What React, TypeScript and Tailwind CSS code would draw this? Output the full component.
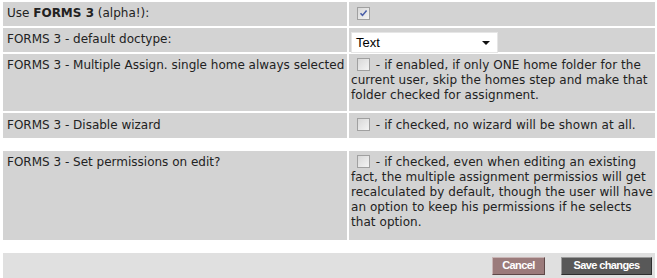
import React from "react";

function Box({ checked = false }: { checked?: boolean }) {
  return (
    <span className="inline-block align-[-2px] w-[13px] h-[13px] border border-[#a0a0a0] bg-gradient-to-br from-[#d8d8d8] to-[#f4f4f4] relative">
      {checked && (
        <svg viewBox="0 0 11 11" className="absolute inset-0 w-[11px] h-[11px]">
          <path d="M2.5 5.2 L4.5 7.4 L8.6 2.6" fill="none" stroke="#4a5fa8" strokeWidth="1.6" />
        </svg>
      )}
    </span>
  );
}

export default function App() {
  const cell = "bg-[#d3d3d3] text-[#222] leading-[15px] whitespace-nowrap";
  const left = `${cell} pl-[4px] pt-[4px]`;
  const right = `${cell} pl-[2px] pt-[4px] tracking-[0.06px]`;
  return (
    <div
      className="w-[657px] h-[278px] bg-white pl-[3px] pt-[2px] text-[12px]"
      style={{ fontFamily: '"DejaVu Sans", Verdana, sans-serif' }}
    >
      <div className="grid grid-cols-[344px_306px] gap-x-[2px] gap-y-[2px] w-[652px]">
        <div className={`${left} h-[24px]`}>
          Use <b>FORMS 3</b> (alpha!):
        </div>
        <div className={`${right} h-[24px] pl-[8px] pt-[5px]`}>
          <Box checked />
        </div>

        <div className={`${left} h-[24px]`}>FORMS 3 - default doctype:</div>
        <div className={`${right} h-[24px] pt-[2px]`}>
          <div
            className="w-[147px] h-[21px] bg-white border border-[#e6e6e6] flex items-center justify-between pl-[4px] pr-[7px] text-[13px] text-black tracking-normal"
            style={{ fontFamily: '"Liberation Sans", Arial, sans-serif' }}
          >
            <span>Text</span>
            <svg width="8" height="4" viewBox="0 0 8 4">
              <path d="M0 0 H8 L4 4 Z" fill="#111" />
            </svg>
          </div>
        </div>

        <div className={`${left} h-[57px]`}>FORMS 3 - Multiple Assign. single home always selected</div>
        <div className={`${right} h-[57px]`}>
          <span className="ml-[6px] mr-[2px]"><Box /></span> - if enabled, if only ONE home folder for the
          <br />
          current user, skip the homes step and make that
          <br />
          folder checked for assignment.
        </div>

        <div className={`${left} h-[25px] pt-[5px]`}>FORMS 3 - Disable wizard</div>
        <div className={`${right} h-[25px] pt-[5px]`}>
          <span className="ml-[6px] mr-[2px]"><Box /></span> - if checked, no wizard will be shown at all.
        </div>

        <div className="col-span-2 h-[9px] bg-white"></div>

        <div className={`${left} h-[89px]`}>FORMS 3 - Set permissions on edit?</div>
        <div className={`${right} h-[89px]`}>
          <span className="ml-[6px] mr-[2px]"><Box /></span> - if checked, even when editing an existing
          <br />
          fact, the multiple assignment permissios will get
          <br />
          recalculated by default, though the user will have
          <br />
          an option to keep his permissions if he selects
          <br />
          that option.
        </div>
      </div>

      <div className="mt-[13px] w-[652px] h-[25px] bg-[#e0e0e0] flex items-center justify-end gap-[16px] pr-[3px]">
        <button
          className="h-[18px] w-[53px] bg-[#9b7b7b] text-white font-bold text-[11px] tracking-[-0.6px] border border-t-[#c9b5b5] border-l-[#c9b5b5] border-b-[#5e4848] border-r-[#5e4848] leading-none"
          style={{ fontFamily: '"Liberation Sans", Arial, sans-serif' }}
        >
          Cancel
        </button>
        <button
          className="h-[18px] w-[91px] bg-[#585858] text-white font-bold text-[11px] tracking-[-0.6px] border border-t-[#9a9a9a] border-l-[#9a9a9a] border-b-[#2e2e2e] border-r-[#2e2e2e] leading-none"
          style={{ fontFamily: '"Liberation Sans", Arial, sans-serif' }}
        >
          Save changes
        </button>
      </div>
    </div>
  );
}
